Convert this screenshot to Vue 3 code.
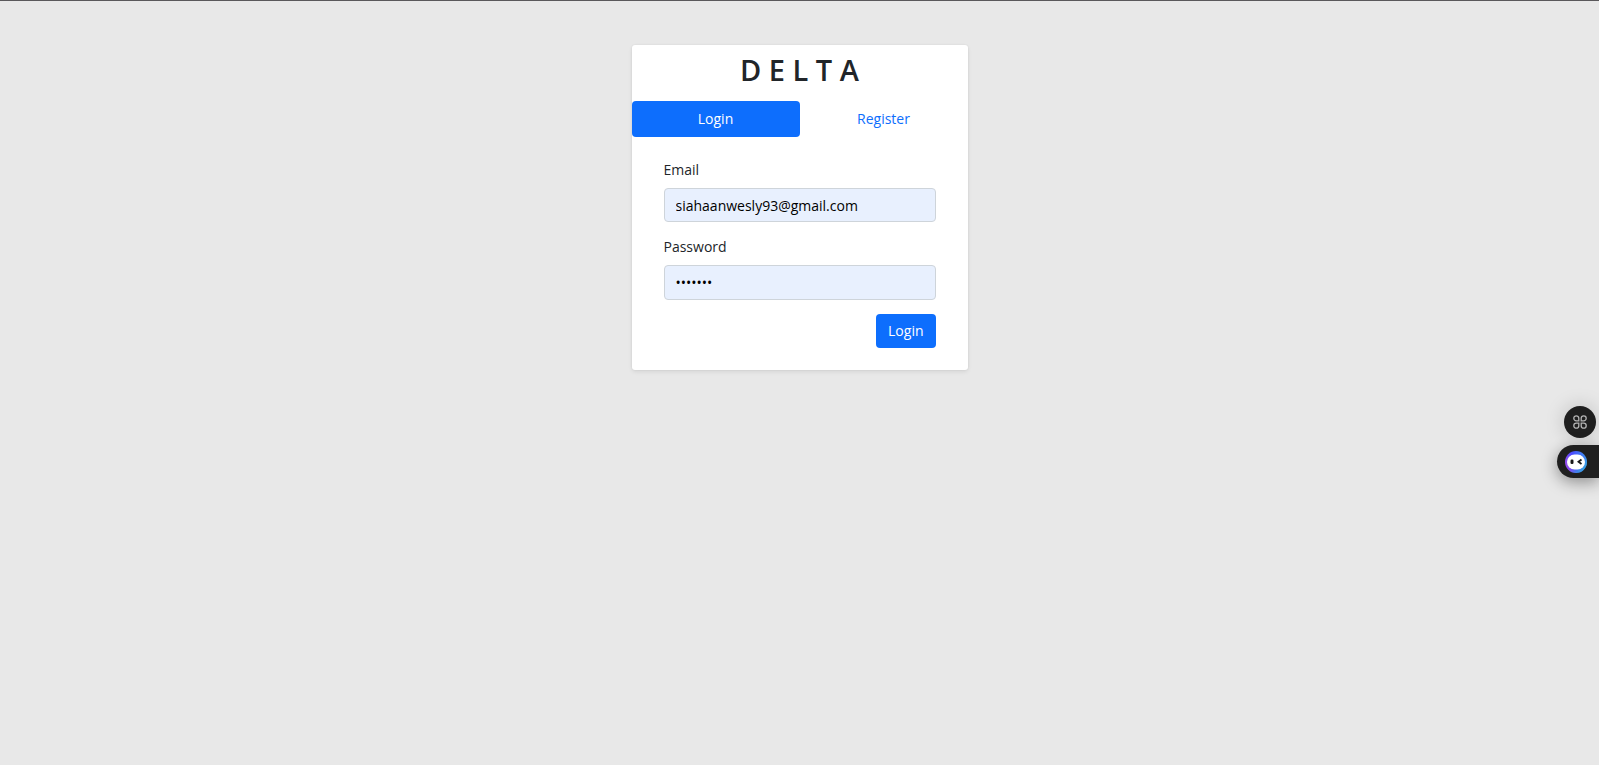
<script setup>
import { ref } from 'vue'

const email = ref('siahaanwesly93@gmail.com')
const password = ref('delta93')
</script>

<template>
  <main class="page">
    <section class="card">
      <h1 class="brand">D E L T A</h1>
      <nav class="tabs">
        <a class="tab active" href="#login">Login</a>
        <a class="tab" href="#register">Register</a>
      </nav>
      <form class="form" @submit.prevent>
        <div class="field">
          <label for="email">Email</label>
          <input id="email" v-model="email" type="email" />
        </div>
        <div class="field">
          <label for="password">Password</label>
          <input id="password" v-model="password" type="password" />
        </div>
        <button class="submit" type="submit">Login</button>
      </form>
    </section>

    <aside class="dock">
      <button class="apps" type="button" aria-label="Apps">
        <svg width="14" height="14" viewBox="0 0 14 14" fill="none" stroke="#b4b4b4" stroke-width="1.3">
          <path d="M5.8 5.8H3.3A2.5 2.5 0 1 1 5.8 3.3Z" />
          <path d="M8.2 5.8V3.3A2.5 2.5 0 1 1 10.7 5.8Z" />
          <path d="M5.8 8.2V10.7A2.5 2.5 0 1 1 3.3 8.2Z" />
          <path d="M8.2 8.2H10.7A2.5 2.5 0 1 1 8.2 10.7Z" />
        </svg>
      </button>
      <button class="assistant" type="button" aria-label="Assistant">
        <svg width="22" height="22" viewBox="0 0 22 22">
          <defs>
            <linearGradient id="ring" x1="0" y1="0.7" x2="1" y2="0.4">
              <stop offset="0" stop-color="#a04be8" />
              <stop offset="0.45" stop-color="#4a4bff" />
              <stop offset="1" stop-color="#3d8cf0" />
            </linearGradient>
            <linearGradient id="glow" x1="0.4" y1="0.4" x2="0.9" y2="1">
              <stop offset="0.3" stop-color="#35b5d8" stop-opacity="0" />
              <stop offset="1" stop-color="#35b5d8" />
            </linearGradient>
          </defs>
          <circle cx="11" cy="11" r="11" fill="url(#ring)" />
          <circle cx="11" cy="11" r="11" fill="url(#glow)" />
          <rect x="2" y="3.5" width="18" height="15" rx="7.5" fill="#fff" />
          <rect x="5.5" y="8.5" width="3" height="4.5" rx="1.2" fill="#181818" />
          <path d="M16.5 8.5L13.5 10.8L16.5 13" fill="none" stroke="#181818" stroke-width="1.8" />
        </svg>
      </button>
    </aside>
  </main>
</template>

<style>
body {
  background: #e8e8e8;
}
</style>

<style scoped>
.page {
  box-sizing: border-box;
  min-height: 100vh;
  padding: 44px 16px;
  border-top: 1px solid #5a585b;
  background: #e8e8e8;
  color: #212529;
  font-family: "Open Sans", "Noto Sans", sans-serif;
  font-size: 14px;
  line-height: 22px;
}
.card {
  max-width: 336px;
  margin: 0 auto;
  border-radius: 3px;
  background: #fff;
  box-shadow: 0 2px 4px rgba(0, 0, 0, 0.08), 0 0 2px rgba(0, 0, 0, 0.08);
}
.brand {
  margin: 0;
  padding: 7px 0 13px;
  font-size: 29px;
  font-weight: 600;
  line-height: 36px;
  text-align: center;
}
.tabs {
  display: flex;
}
.tab {
  flex: 1;
  padding: 7px 14px;
  border-radius: 4px;
  color: #0d6efd;
  text-align: center;
  text-decoration: none;
}
.tab.active {
  background: #0d6efd;
  color: #fff;
}
.form {
  display: flex;
  flex-direction: column;
  padding: 22px 32px;
}
.field {
  display: flex;
  flex-direction: column;
  gap: 7px;
  margin-bottom: 14px;
}
.field input {
  box-sizing: border-box;
  width: 100%;
  padding: 5px 11px;
  border: 1px solid #ced4da;
  border-radius: 4px;
  outline: none;
  background: #e8f0fe;
  color: #000;
  font: inherit;
}
.field input[type="email"] {
  height: 34px;
}
.field input[type="password"] {
  height: 35px;
}
.submit {
  align-self: flex-end;
  padding: 6px 12px;
  border: 0;
  border-radius: 4px;
  background: #0d6efd;
  color: #fff;
  font: inherit;
}
.dock {
  position: fixed;
  right: 0;
  bottom: 287px;
  display: flex;
  flex-direction: column;
  align-items: flex-end;
  gap: 7px;
}
.dock button {
  display: flex;
  align-items: center;
  border: 0;
  background: #1f1f1f;
}
.dock .apps {
  justify-content: center;
  width: 32px;
  height: 32px;
  margin-right: 3px;
  padding: 0;
  border-radius: 50%;
  box-shadow: 0 0 20px rgba(0, 0, 0, 0.18);
}
.dock .assistant {
  width: 42px;
  height: 33px;
  padding: 0 8px;
  border-radius: 17px 0 0 17px;
  box-shadow: 0 4px 16px rgba(0, 0, 0, 0.4);
}
</style>
